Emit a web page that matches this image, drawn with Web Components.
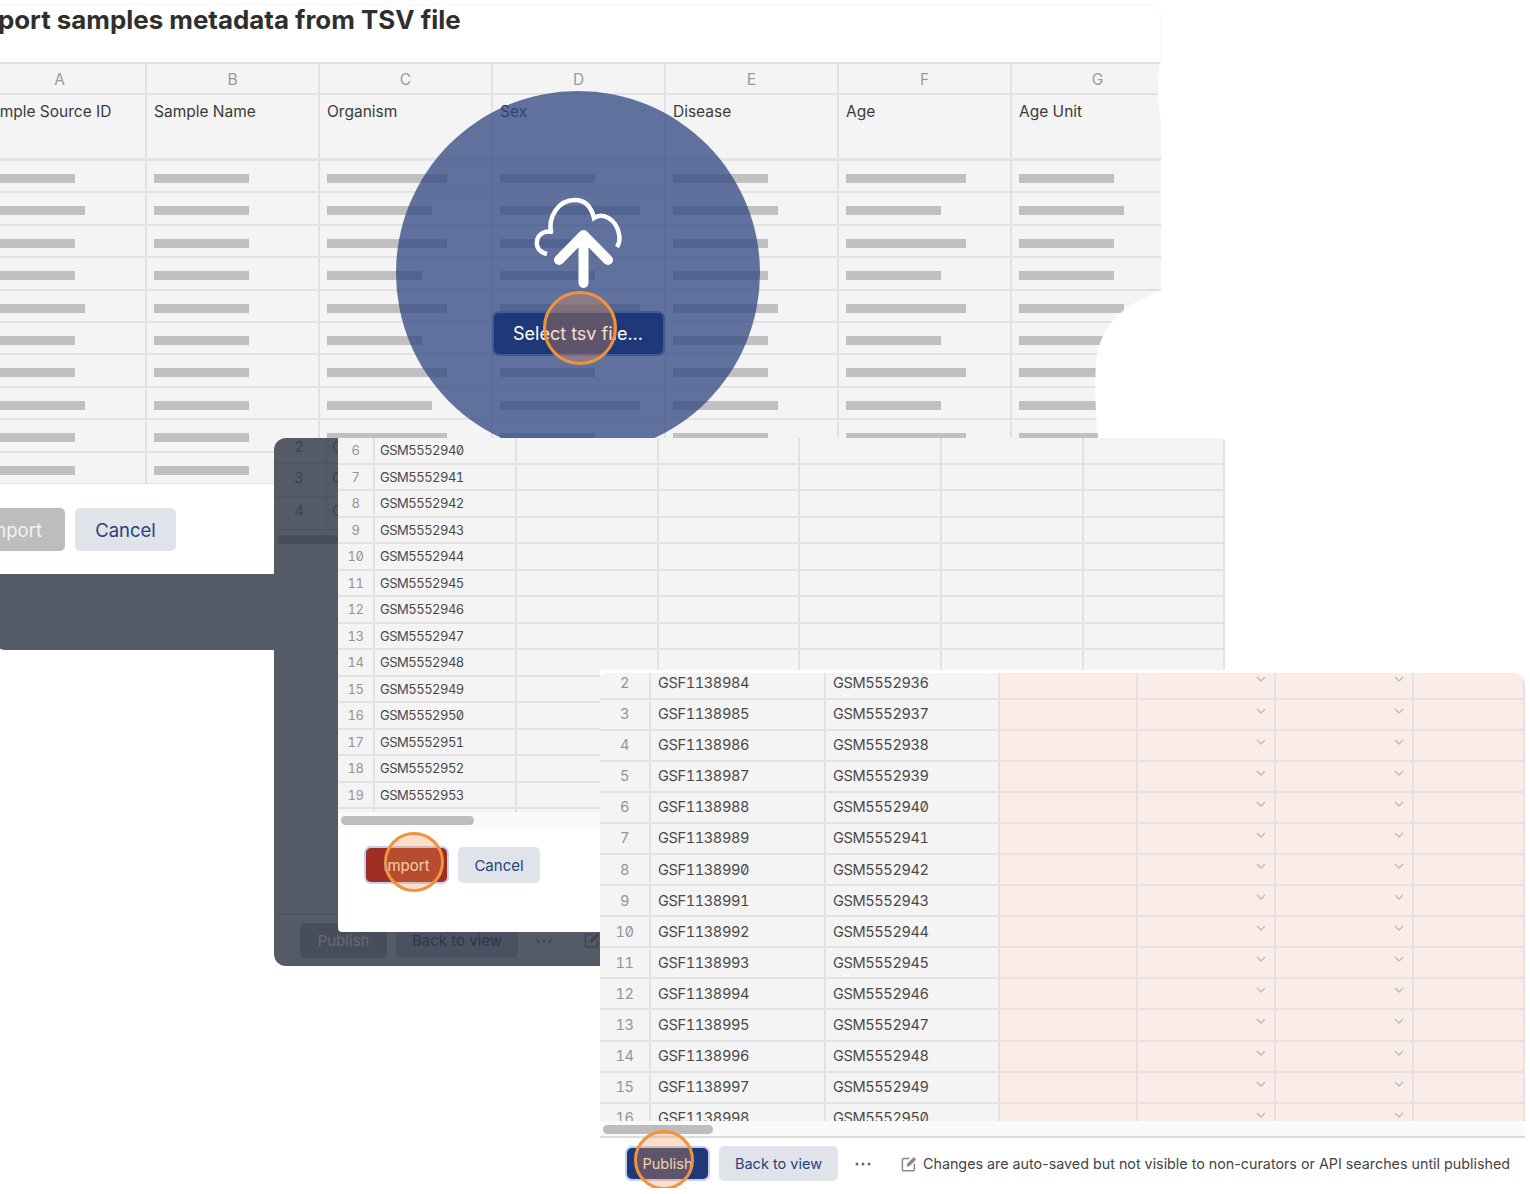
<!DOCTYPE html>
<html lang="en">
<head>
<meta charset="utf-8">
<title>Import samples metadata</title>
<style>
  html, body { margin: 0; height: 100%; background: #fff; overflow: hidden; }
  body { font-family: Inter, Roboto, "Liberation Sans", sans-serif; color: #333; }
  #canvas { position: relative; width: 1530px; height: 1194px; overflow: hidden; }
</style>
</head>
<body>
<div id="canvas">
  <tsv-dialog></tsv-dialog>
  <dark-window></dark-window>
  <review-window></review-window>
</div>

<script>
/* Shared colours for the three layered screenshots. */
const INK_BLUE = '#2a3f7a';
const GRID_LINE = '#e2e2e2';
const SHEET_BG = '#f4f4f4';

/* Bar widths per row, columns A..G (skeleton placeholder cells). */
const BAR_ROWS = [
  [94, 95, 120, 95, 95, 120, 95],
  [104, 95, 105, 140, 105, 95, 105],
  [94, 95, 120, 95, 95, 120, 95],
  [94, 95, 95, 95, 95, 95, 95],
  [104, 95, 120, 140, 105, 120, 105],
  [94, 95, 95, 95, 95, 95, 95],
  [94, 95, 120, 95, 95, 120, 95],
  [104, 95, 105, 140, 105, 95, 95],
  [94, 95, 120, 95, 95, 120, 95],
  [94, 95, 120, 95, 95, 120, 95],
];

class UiButton extends HTMLElement {
  connectedCallback() {
    const kind = this.getAttribute('kind') || 'secondary';
    const size = this.getAttribute('size') || '15px';
    const palette = {
      primary: 'background:#1f3877;color:#f3ead9;box-shadow:0 0 0 2px #c5cdf0;',
      danger: 'background:#9e2d22;color:#f7e4d4;box-shadow:0 0 0 2px #c5cdf0;',
      select: 'background:#1f3877;color:#fff;box-shadow:0 0 0 2px #3f5a9a;',
      disabled: 'background:#bdbdbd;color:#f3f3f3;',
      secondary: `background:#e0e3ea;color:${INK_BLUE};`,
    }[kind];
    this.attachShadow({ mode: 'open' }).innerHTML = `
      <style>
        :host { display: inline-flex; flex: none; }
        div {
          ${palette}
          width: 100%; height: 100%;
          display: flex; align-items: center; justify-content: center;
          border-radius: 5px;
          font-size: ${size};
          white-space: nowrap;
        }
      </style>
      <div><slot></slot></div>`;
  }
}

/* The orange "click here" ring from the walkthrough. */
class ClickRing extends HTMLElement {
  connectedCallback() {
    this.attachShadow({ mode: 'open' }).innerHTML = `
      <style>
        :host {
          position: absolute;
          box-sizing: border-box;
          border: 3px solid #f0933f;
          border-radius: 50%;
          background: rgba(242, 150, 80, .3);
          z-index: 5;
        }
      </style>`;
  }
}

class SkeletonSheet extends HTMLElement {
  connectedCallback() {
    const letters = ['A', 'B', 'C', 'D', 'E', 'F', 'G'];
    const names = ['Sample Source ID', 'Sample Name', 'Organism', 'Sex', 'Disease', 'Age', 'Age Unit'];
    const cells = [];
    letters.forEach((l) => cells.push(`<div class="c letter">${l}</div>`));
    names.forEach((n) => cells.push(`<div class="c name">${n}</div>`));
    BAR_ROWS.forEach((row) => row.forEach((w) => {
      cells.push(`<div class="c row"><i style="width:${w}px"></i></div>`);
    }));
    this.attachShadow({ mode: 'open' }).innerHTML = `
      <style>
        :host { display: block; height: 422px; overflow: hidden; background: ${SHEET_BG}; border-top: 2px solid ${GRID_LINE}; box-sizing: border-box; }
        .grid {
          display: grid;
          margin-left: -18px;
          grid-template-columns: repeat(7, 173px);
          grid-template-rows: 31px 66px repeat(10, 32.4px);
        }
        .c { box-sizing: border-box; border-right: 2px solid ${GRID_LINE}; border-bottom: 2px solid ${GRID_LINE}; padding-left: 7px; }
        .letter { text-align: center; padding: 6px 0 0; font-size: 15.5px; color: #9a9a9a; line-height: 20px; }
        .name { padding-top: 7px; font-size: 15.5px; line-height: 20px; color: #3a3a3a; border-bottom-width: 3px; }
        .row { padding-top: 13px; }
        i { display: block; height: 9px; background: #c0c0c0; }
      </style>
      <div class="grid">${cells.join('')}</div>`;
  }
}

class CloudUpload extends HTMLElement {
  connectedCallback() {
    this.attachShadow({ mode: 'open' }).innerHTML = `
      <style>:host { display: block; line-height: 0; }</style>
      <svg width="90" height="94" viewBox="0 0 90 94" fill="none" stroke="#fff" stroke-linecap="butt">
        <path stroke-width="4.5" d="M13 57C5 55 2 50 3 44C4 37 11 33 19 35"/>
        <path stroke-width="4.5" d="M17 36C14 20 24 3 41 3C50 3 57 9 60 21C69 15 82 22 85 37C86 42 85 47 83 50"/>
        <path stroke-width="10" stroke-linecap="round" stroke-linejoin="round" d="M25 63L49.5 38L74 63M49.5 40V86"/>
      </svg>`;
  }
}

/* Round blue spotlight with the upload prompt inside. */
class UploadSpot extends HTMLElement {
  connectedCallback() {
    this.attachShadow({ mode: 'open' }).innerHTML = `
      <style>
        :host {
          position: absolute; left: 404px; top: 87px;
          width: 364px; height: 364px; border-radius: 50%;
          background: rgba(45, 69, 127, .75);
          display: flex; flex-direction: column; align-items: center;
          padding-top: 106px; box-sizing: border-box;
        }
        cloud-upload { margin: 0 0 0 1px; }
        ui-button { width: 169px; height: 41px; margin-top: 22px; }
      </style>
      <cloud-upload></cloud-upload>
      <ui-button kind="select" size="18px">Select tsv file...</ui-button>`;
  }
}

class TsvDialog extends HTMLElement {
  connectedCallback() {
    this.attachShadow({ mode: 'open' }).innerHTML = `
      <style>
        :host {
          position: absolute; left: -8px; top: 4px;
          width: 1169px; height: 646px;
          overflow: hidden;
          background: #fff;
          border-radius: 0 12px 0 14px;
          box-shadow: inset 0 2px 2px -1px #f6f6f6, inset -1px 0 0 #f8f8f8;
          display: flex; flex-direction: column;
        }
        h1 {
          margin: 0; height: 58px; flex: none; box-sizing: border-box;
          text-indent: -25px;
          font-size: 25.9px; line-height: 31px; font-weight: 700; color: #2f2f2f;
          white-space: nowrap; overflow: hidden;
        }
        skeleton-sheet { flex: none; }
        .foot { flex: none; height: 90px; display: flex; gap: 10px; padding-top: 24px; box-sizing: border-box; margin-left: -30px; }
        .foot ui-button { height: 43px; }
        .scrim { flex: 1; background: #555b66; }
        svg { position: absolute; left: 1080px; top: 0; }
        click-ring { left: 551px; top: 287px; width: 74px; height: 74px; }
      </style>
      <h1>Import samples metadata from TSV file</h1>
      <skeleton-sheet></skeleton-sheet>
      <div class="foot">
        <ui-button kind="disabled" size="18.5px" style="width:103px">Import</ui-button>
        <ui-button kind="secondary" size="18.5px" style="width:101px">Cancel</ui-button>
      </div>
      <div class="scrim"></div>
      <upload-spot></upload-spot>
      <svg width="89" height="440" viewBox="0 0 89 440" aria-hidden="true">
        <path fill="#fff" d="M89 56C85 70 85 90 89 120Z"/>
        <path fill="#fff" d="M89 287C60 298 33 312 25 350C22 375 23 410 27 440H89Z"/>
      </svg>
      <click-ring></click-ring>`;
  }
}

/* Numbered data sheet: rows attr is "first:count", cols a comma list of widths. */
class DataSheet extends HTMLElement {
  connectedCallback() {
    const widths = this.getAttribute('cols').split(',');
    const [first, count] = this.getAttribute('rows').split(':').map(Number);
    const rowH = this.getAttribute('row-h');
    const size = this.getAttribute('size');
    const track = this.getAttribute('track');
    const sf = this.getAttribute('sf');
    const gsm = Number(this.getAttribute('gsm'));
    const pink = Number(this.getAttribute('pink') || 0);
    const cells = [];
    for (let i = 0; i < count; i++) {
      const n = first + i;
      cells.push(`<div class="c num">${n}</div>`);
      if (sf) cells.push(`<div class="c txt">GSF${Number(sf) + i}</div>`);
      cells.push(`<div class="c txt">GSM${gsm + i}</div>`);
      const used = sf ? 3 : 2;
      for (let k = used; k < widths.length; k++) {
        const isPink = pink && k >= widths.length - pink;
        const chev = isPink && (k === used + 1 || k === used + 2)
          ? '<svg width="10" height="6" viewBox="0 0 10 6"><path d="M1 1l4 4 4-4" fill="none" stroke="#bbb" stroke-width="1.4"/></svg>' : '';
        cells.push(`<div class="c${isPink ? ' pink' : ''}">${chev}</div>`);
      }
    }
    this.attachShadow({ mode: 'open' }).innerHTML = `
      <style>
        :host { display: block; overflow: hidden; background: ${SHEET_BG}; }
        .grid {
          display: grid;
          grid-template-columns: ${widths.map((w) => w + 'px').join(' ')};
          grid-auto-rows: ${rowH}px;
          margin-top: var(--sheet-shift, 0);
          font-variant-numeric: tabular-nums;
          font-feature-settings: "zero" 1, "tnum" 1;
        }
        .c {
          box-sizing: border-box;
          border-right: 2px solid ${GRID_LINE};
          border-bottom: 2px solid ${GRID_LINE};
          display: flex; align-items: center;
          font-size: ${size}; letter-spacing: ${track}; color: #4a4a4a; white-space: nowrap; overflow: hidden;
        }
        .txt { padding-left: var(--txt-pad, 7px); }
        .num { justify-content: center; color: #959595; }
        .pink { background: #fbece7; justify-content: flex-end; align-items: flex-start; padding: 8px 8px 0 0; }
        svg { display: block; }
      </style>
      <div class="grid">${cells.join('')}</div>`;
  }
}

class ScrollTrack extends HTMLElement {
  connectedCallback() {
    const w = this.getAttribute('thumb');
    this.attachShadow({ mode: 'open' }).innerHTML = `
      <style>
        :host { display: block; background: #fafafa; box-sizing: border-box; padding: 4px 3px; }
        i { display: block; height: 9px; width: ${w}px; border-radius: 5px; background: #bdbdbd; }
      </style>
      <i></i>`;
  }
}

const EDIT_ICON = (c) => `<svg width="16" height="16" viewBox="0 0 16 16" fill="none" aria-hidden="true" style="display:block">
  <path d="M8.5 2.5H2.6A1.2 1.2 0 0 0 1.4 3.7v9.8a1.2 1.2 0 0 0 1.2 1.2h9.6a1.2 1.2 0 0 0 1.2-1.2V7.8" stroke="${c}" stroke-width="1.5"/>
  <path d="M5.6 10.8l.7-3.2L12.8 1l2.4 2.4-6.5 6.7z" fill="${c}"/></svg>`;
const DOTS_ICON = (c) => `<svg width="16" height="4" viewBox="0 0 16 4" aria-hidden="true" style="display:block">
  <circle cx="2" cy="2" r="1.5" fill="${c}"/><circle cx="8" cy="2" r="1.5" fill="${c}"/><circle cx="14" cy="2" r="1.5" fill="${c}"/></svg>`;

/* Middle layer: dimmed page behind the second import dialog. */
class DarkWindow extends HTMLElement {
  connectedCallback() {
    this.attachShadow({ mode: 'open' }).innerHTML = `
      <style>
        :host {
          position: absolute; left: 274px; top: 438px;
          width: 360px; height: 528px;
          background: #555b66;
          border-radius: 12px 0 0 12px;
          display: flex; flex-direction: column;
          color: #3d424c;
        }
        .rows { flex: none; font-size: 15px; overflow: hidden; border-radius: 12px 0 0 0; }
        .r { --pb: 5px; display: flex; height: 33px; box-sizing: border-box; border-bottom: 1px solid #4d525d; align-items: center; }
        .r:first-child { --pb: 8px; height: 26px; }
        .r b { font-weight: 400; width: 53px; flex: none; padding: 0 2px var(--pb) 0; box-sizing: border-box; border-right: 1px solid #4d525d; align-self: stretch; display: flex; align-items: center; justify-content: center; }
        .r span { padding: 0 0 var(--pb) 5px; white-space: nowrap; }
        .bar { flex: none; height: 9px; width: 62px; margin: 5px 0 0 3px; background: #474d59; border-radius: 5px; }
        .foot {
          margin-top: auto; height: 52px; box-sizing: border-box;
          border-top: 1px solid #4d525d;
          display: flex; align-items: flex-start; padding: 8px 0 0 26px; gap: 9px;
        }
        .foot ui-button { height: 35px; }
        .foot .dots { margin: 16px 0 0 9px; }
        .foot .edit { margin: 9px 0 0 23px; }
        .dialog {
          position: absolute; left: 64px; top: 0;
          width: 887px; height: 494px;
          background: #fff;
          border-radius: 0 6px 0 4px;
          overflow: hidden;
          display: flex; flex-direction: column;
        }
        data-sheet { flex: none; height: 374px; --txt-pad: 5px; box-shadow: inset -2px 0 0 #ddd; }
        scroll-track { flex: none; height: 16px; padding-top: 4px; }
        .actions { display: flex; gap: 11px; padding: 20px 0 0 28px; }
        .actions ui-button { height: 34px; }
        .actions ui-button + ui-button { height: 36px; margin-top: -1px; }
        click-ring { left: 46px; top: 394px; width: 60px; height: 60px; }
      </style>
      <div class="rows">
        <div class="r"><b>2</b><span>GSF1138984</span></div>
        <div class="r"><b>3</b><span>GSF1138985</span></div>
        <div class="r"><b>4</b><span>GSF1138986</span></div>
      </div>
      <div class="bar"></div>
      <div class="foot">
        <ui-button kind="secondary" size="15px" style="width:87px"><span style="color:#666c78">Publish</span></ui-button>
        <ui-button kind="secondary" size="15px" style="width:122px"><span style="color:#2b3650">Back to view</span></ui-button>
        <span class="dots">${DOTS_ICON('#3f444e')}</span>
        <span class="edit">${EDIT_ICON('#3f444e')}</span>
      </div>
      <div class="dialog">
        <data-sheet cols="37,141.8,141.8,141.8,141.8,141.8,141" rows="6:15" row-h="26.5" size="13px" track="-.5px" gsm="5552940"></data-sheet>
        <scroll-track thumb="133"></scroll-track>
        <div class="actions">
          <ui-button kind="danger" size="15px" style="width:81px">Import</ui-button>
          <ui-button kind="secondary" size="15px" style="width:82px">Cancel</ui-button>
        </div>
        <click-ring></click-ring>
      </div>`;
    // footer buttons sit under the scrim, so dim their fills
    this.shadowRoot.querySelectorAll('.foot ui-button').forEach((b, i) => {
      b.shadowRoot.querySelector('div').style.background = i ? '#4b5160' : '#474d59';
    });
  }
}

/* Front layer: curation sheet with the publish bar. */
class ReviewWindow extends HTMLElement {
  connectedCallback() {
    this.attachShadow({ mode: 'open' }).innerHTML = `
      <style>
        :host {
          position: absolute; left: 600px; top: 670px;
          width: 925px; height: 518px;
          background: #fff;
          overflow: hidden;
          padding-top: 3px; box-sizing: border-box;
          display: flex; flex-direction: column;
        }
        data-sheet { flex: none; height: 448px; --sheet-shift: -4.6px; --txt-pad: 7px; border-radius: 6px 12px 0 0; }
        scroll-track { flex: none; height: 17px; width: 925px; border-bottom: 2px solid #dcdcdc; }
        .foot {
          flex: none; display: flex; align-items: center;
          padding: 8px 0 0 27px; gap: 9px;
          font-size: 14.3px; color: #444; white-space: nowrap;
        }
        .foot ui-button { height: 31px; }
        .foot ui-button + ui-button { height: 35px; margin-left: 2px; }
        .dots { margin: 0 0 0 8px; }
        .edit { margin: 0 -3px 0 21px; }
        click-ring { left: 34px; top: 460px; width: 60px; height: 60px; }
      </style>
      <data-sheet cols="51,175,174,138,138,138,111" rows="2:16" row-h="31.1" size="14.6px" track="-.4px" sf="1138984" gsm="5552936" pink="4"></data-sheet>
      <scroll-track thumb="110"></scroll-track>
      <div class="foot">
        <ui-button kind="primary" size="14.5px" style="width:81px">Publish</ui-button>
        <ui-button kind="secondary" size="14.5px" style="width:119px">Back to view</ui-button>
        <span class="dots">${DOTS_ICON('#5a6a90')}</span>
        <span class="edit">${EDIT_ICON('#8a8a8a')}</span>
        <span>Changes are auto-saved but not visible to non-curators or API searches until published</span>
      </div>
      <click-ring></click-ring>`;
  }
}

customElements.define('ui-button', UiButton);
customElements.define('click-ring', ClickRing);
customElements.define('skeleton-sheet', SkeletonSheet);
customElements.define('cloud-upload', CloudUpload);
customElements.define('upload-spot', UploadSpot);
customElements.define('tsv-dialog', TsvDialog);
customElements.define('data-sheet', DataSheet);
customElements.define('scroll-track', ScrollTrack);
customElements.define('dark-window', DarkWindow);
customElements.define('review-window', ReviewWindow);
</script>
</body>
</html>
